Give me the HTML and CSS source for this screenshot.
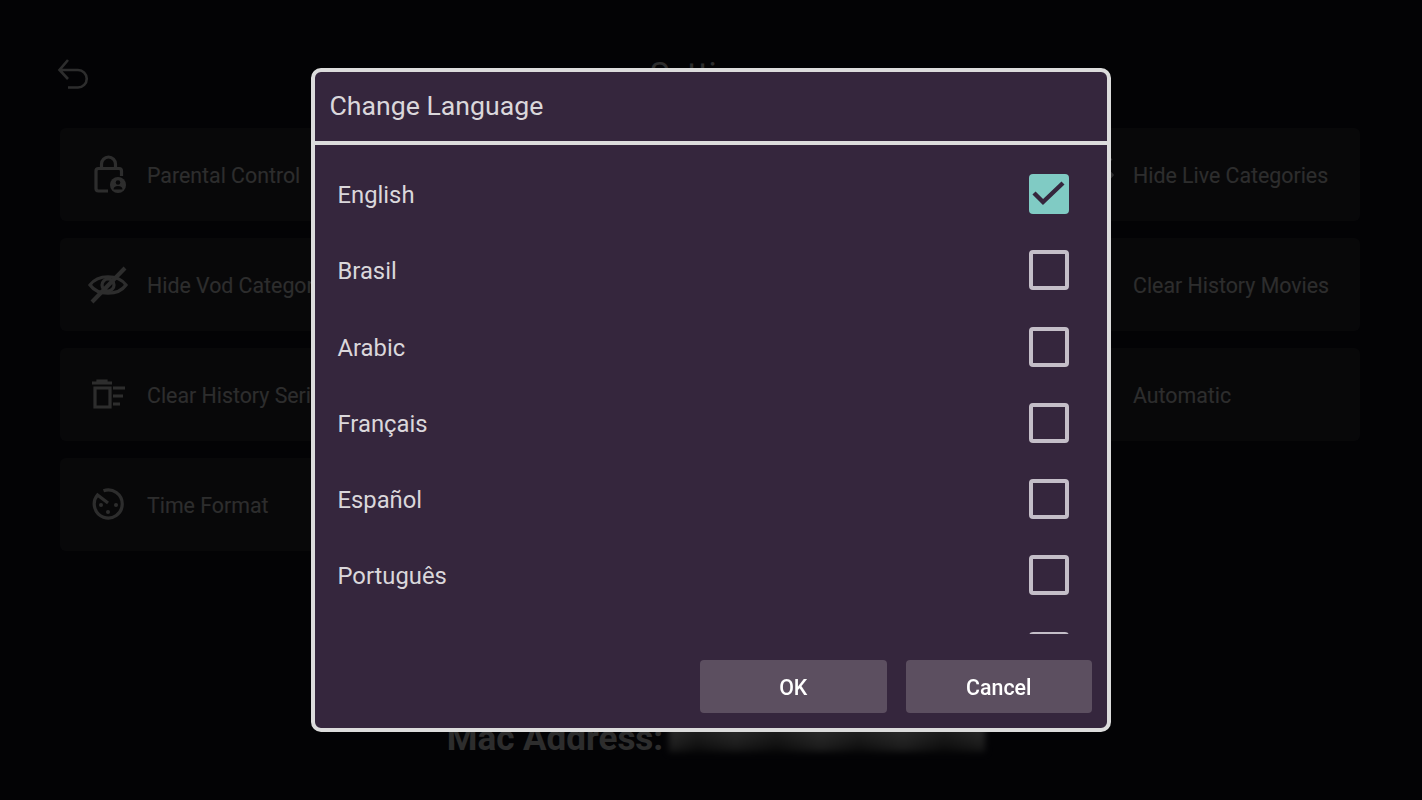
FILE: index.html
```html
<!DOCTYPE html>
<html lang="en">
<head>
    <meta charset="UTF-8">
    <meta name="viewport" content="width=device-width, initial-scale=1.0">
    <title>Settings</title>
    <link rel="stylesheet" href="styles.css">
</head>
<body>
    <div class="page">
        <div class="top-bar">
            <svg class="back-icon" width="32" height="32" viewBox="0 0 32 32"><path d="M11 2 L2.5 12 L11 21 M2.5 12 H21 a8.5 8.5 0 0 1 0 17.5 H11"/></svg>
            <h1>Settings</h1>
        </div>
        <div class="settings-grid">
            <div class="card">
                <svg class="card-icon" width="40" height="40" viewBox="0 0 40 40"><path d="M20 36H10.500a2.500 2.500 0 0 1-2.500-2.500V16a2.500 2.500 0 0 1 2.500-2.500H31a2.500 2.500 0 0 1 2.500 2.500V21M13.500 13V9a7 7 0 0 1 14 0v4"/><circle class="fill" cx="30" cy="30" r="8"/><circle class="cut" cx="30" cy="27.500" r="2.300"/><path class="cut" d="M25.500 34.500a4.500 3.500 0 0 1 9 0z"/></svg>
                <span>Parental Control</span>
            </div>
            <div class="card">
                <svg class="card-icon" width="40" height="40" viewBox="0 0 40 40"><path d="M3 20V12h4M12 20h20"/></svg>
                <span>Change Language</span>
            </div>
            <div class="card">
                <svg class="card-icon" width="40" height="40" viewBox="0 0 40 40"><path d="M2 20C10 9 30 9 38 20C30 31 10 31 2 20Z"/><circle cx="20" cy="20" r="6"/><path class="thick" d="M37 3L4 37"/></svg>
                <span>Hide Live Categories</span>
            </div>
            <div class="card">
                <svg class="card-icon" width="40" height="40" viewBox="0 0 40 40"><path d="M2 20C10 9 30 9 38 20C30 31 10 31 2 20Z"/><circle cx="20" cy="20" r="6"/><path class="thick" d="M37 3L4 37"/></svg>
                <span>Hide Vod Categories</span>
            </div>
            <div class="card">
                <svg class="card-icon" width="40" height="40" viewBox="0 0 40 40"><path d="M4 8h20M10 8V6h8v2M7 12v20h15V12z"/></svg>
                <span>Clear History Live</span>
            </div>
            <div class="card">
                <svg class="card-icon" width="40" height="40" viewBox="0 0 40 40"><path d="M4 8h20M10 8V6h8v2M7 12v20h15V12zM25 13h12M25 21h10M25 29h7"/></svg>
                <span>Clear History Movies</span>
            </div>
            <div class="card">
                <svg class="card-icon" width="40" height="40" viewBox="0 0 40 40"><path d="M4 8h20M10 8V6h8v2M7 13h15v19H7zM25 13h12M25 21h10M25 29h7"/></svg>
                <span>Clear History Series</span>
            </div>
            <div class="card">
                <svg class="card-icon" width="40" height="40" viewBox="0 0 40 40"><circle cx="20" cy="20" r="13"/></svg>
                <span>Player</span>
            </div>
            <div class="card">
                <svg class="card-icon" width="40" height="40" viewBox="0 0 40 40"><circle cx="20" cy="20" r="13"/></svg>
                <span>Automatic</span>
            </div>
            <div class="card">
                <svg class="card-icon" width="40" height="40" viewBox="0 0 40 40"><path d="M15.500 5.800A14 14 0 1 1 9.500 10L20 18"/><circle class="fill" cx="13" cy="20" r="2"/><circle class="fill" cx="28" cy="20" r="2"/><circle class="fill" cx="20" cy="27" r="2"/></svg>
                <span>Time Format</span>
            </div>
        </div>
        <div class="mac-line">
            <span>Mac Address:</span>
            <div class="mac-blur"></div>
        </div>
    </div>

    <div class="overlay">
        <div class="dialog">
            <div class="dialog-title">Change Language</div>
            <div class="lang-list">
                <div class="lang-row">
                    <span>English</span>
                    <div class="checkbox checked">
                        <svg width="40" height="40" viewBox="0 0 40 40"><path d="M5 19L14 28L34 9"/></svg>
                    </div>
                </div>
                <div class="lang-row"><span>Brasil</span><div class="checkbox"></div></div>
                <div class="lang-row"><span>Arabic</span><div class="checkbox"></div></div>
                <div class="lang-row"><span>Français</span><div class="checkbox"></div></div>
                <div class="lang-row"><span>Español</span><div class="checkbox"></div></div>
                <div class="lang-row"><span>Português</span><div class="checkbox"></div></div>
                <div class="lang-row"><div class="checkbox"></div></div>
            </div>
            <div class="dialog-buttons">
                <button class="btn">OK</button>
                <button class="btn">Cancel</button>
            </div>
        </div>
    </div>
</body>
</html>
```

FILE: styles.css
```css
html, body {
    margin: 0;
    height: 100%;
    overflow: hidden;
}
body {
    font-family: Roboto, "Liberation Sans", sans-serif;
    background-color: #0f0f1a;
    color: #e0e0e0;
}
.page {
    height: 800px;
    box-sizing: border-box;
    padding: 58px 62px 42px 60px;
    display: flex;
    flex-direction: column;
}
.top-bar {
    height: 70px;
    position: relative;
    display: flex;
    justify-content: center;
}
.top-bar h1 {
    margin: 0;
    font-size: 33px;
    line-height: 34px;
    font-weight: 400;
}
.back-icon {
    position: absolute;
    left: -3px;
    top: 0;
    fill: none;
    stroke: #e0e0e0;
    stroke-width: 2.6;
}
.settings-grid {
    display: grid;
    grid-template-columns: 314px 1fr 314px;
    grid-auto-rows: 93px;
    gap: 17px;
}
.card {
    display: flex;
    align-items: center;
    gap: 19px;
    padding-left: 28px;
    background: #2a2a30;
    border-radius: 6px;
    font-size: 21.33px;
    white-space: nowrap;
    overflow: hidden;
}
.card span {
    position: relative;
    top: 1.4px;
}
.card-icon {
    flex: none;
    fill: none;
    stroke: #e0e0e0;
    stroke-width: 3.2;
}
.card-icon .fill {
    fill: #e0e0e0;
    stroke: none;
}
.card-icon .cut {
    fill: #2a2a30;
    stroke: none;
}
.card-icon .thick {
    stroke-width: 4;
}
.mac-line {
    margin-top: auto;
    height: 38px;
    padding-left: 12px;
    display: flex;
    justify-content: center;
    gap: 6px;
    font-size: 35px;
    font-weight: 700;
    line-height: 38px;
}
.mac-blur {
    width: 316px;
    height: 32px;
    background:
        linear-gradient(90deg, rgba(255, 255, 255, 0.3), rgba(0, 0, 0, 0.2) 9%, rgba(255, 255, 255, 0.2) 21%, rgba(0, 0, 0, 0.25) 34%, rgba(255, 255, 255, 0.3) 48%, rgba(0, 0, 0, 0.15) 60%, rgba(255, 255, 255, 0.3) 74%, rgba(0, 0, 0, 0.25) 87%, rgba(255, 255, 255, 0.2)),
        linear-gradient(#d0d0d0, #a0a0a0 55%, #404040);
    filter: blur(3px);
}
.overlay {
    position: fixed;
    inset: 0;
    background: rgba(0, 0, 0, 0.8);
    display: flex;
    align-items: center;
    justify-content: center;
}
.dialog {
    width: 800px;
    height: 664px;
    box-sizing: border-box;
    background: #35263d;
    border: 4px solid #dcdcdc;
    border-radius: 10px;
    display: flex;
    flex-direction: column;
    color: #dad7db;
}
.dialog-title {
    height: 68px;
    padding-bottom: 1px;
    flex: none;
    padding-left: 14.5px;
    display: flex;
    align-items: center;
    font-size: 26.67px;
    border-bottom: 4px solid #dcdcdc;
}
.lang-list {
    height: 489px;
    flex: none;
    box-sizing: border-box;
    padding: 11px 38px 0 23px;
    overflow: hidden;
}
.lang-row {
    height: 76.25px;
    display: flex;
    align-items: center;
    font-size: 23.8px;
}
.lang-row span {
    position: relative;
    top: 1px;
    left: -0.5px;
}
.checkbox {
    width: 40px;
    height: 40px;
    box-sizing: border-box;
    border: 4px solid #c4bec8;
    border-radius: 4px;
    flex: none;
    margin-left: auto;
}
.checkbox.checked {
    background: #80cbc4;
    border: none;
}
.checkbox svg {
    display: block;
    fill: none;
    stroke: #35263d;
    stroke-width: 4.4;
}
.dialog-buttons {
    flex: 1;
    display: flex;
    justify-content: flex-end;
    align-items: flex-start;
    gap: 19px;
    padding: 26px 15px 0 0;
}
.btn {
    width: 186.5px;
    height: 53px;
    padding: 2px 0 0;
    border: none;
    border-radius: 4px;
    background: #5c4f60;
    color: #ffffff;
    font-family: inherit;
    font-size: 21.33px;
    font-weight: 500;
}
```
